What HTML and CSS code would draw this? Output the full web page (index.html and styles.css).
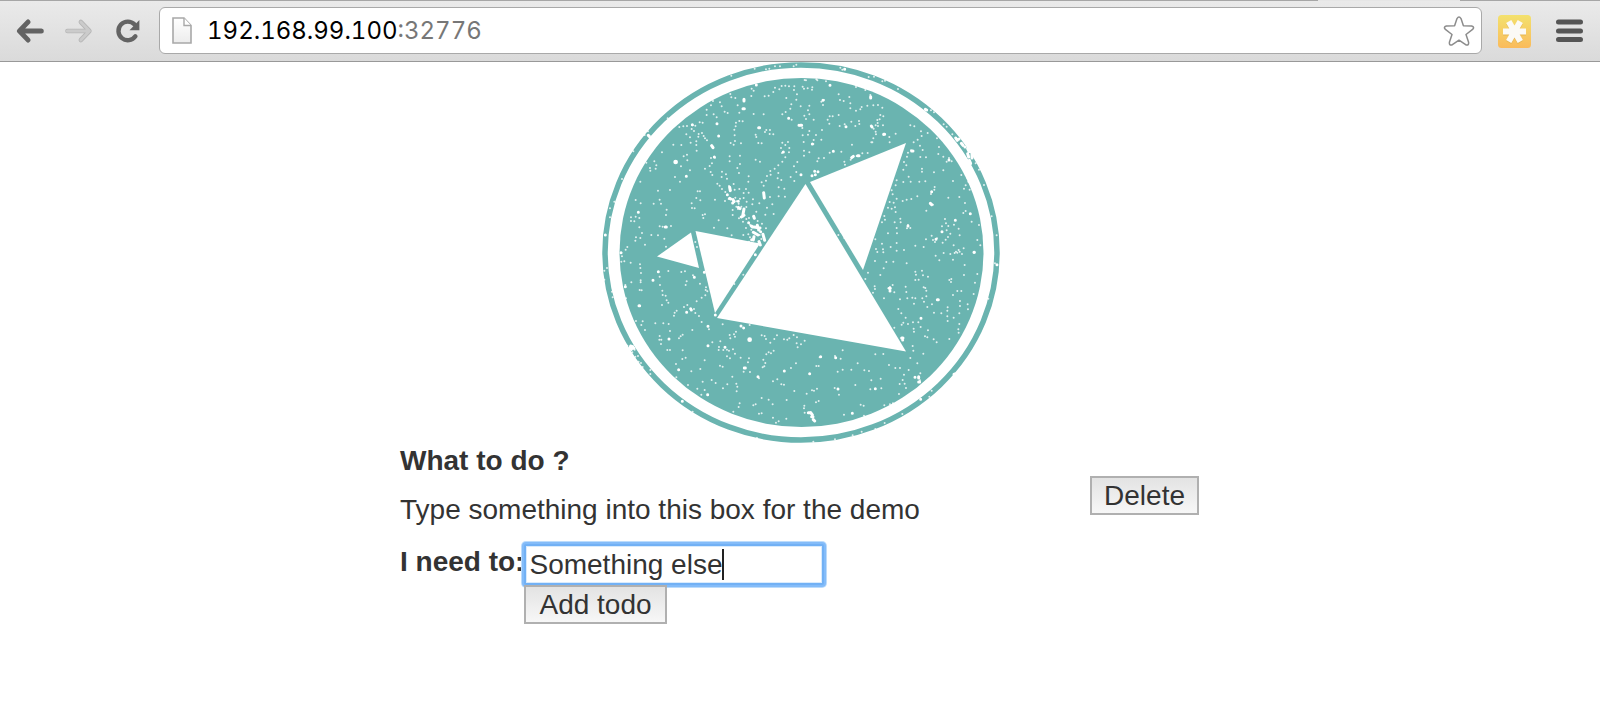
FILE: index.html
```html
<!DOCTYPE html>
<html lang="en">
<head>
<meta charset="utf-8">
<meta name="viewport" content="width=device-width, initial-scale=1">
<title>Todo</title>
<link rel="stylesheet" href="styles.css">
</head>
<body>
<header class="toolbar">
  <span class="tab-gap"></span>
  <nav class="nav">
    <button class="icon-btn" type="button" aria-label="Back">
      <svg width="28" height="26" viewBox="0 0 28 26"><path d="M26 13H4M12 4L3 13l9 9" fill="none" stroke="#636363" stroke-width="5" stroke-linecap="round" stroke-linejoin="round" transform="translate(.5 0) scale(.96 1)"/></svg>
    </button>
    <button class="icon-btn" type="button" aria-label="Forward">
      <svg width="28" height="26" viewBox="0 0 28 26"><path d="M3 13h22M17 4l9 9-9 9" fill="none" stroke="#b6b6b6" stroke-width="4.6" stroke-linecap="round" stroke-linejoin="round" transform="translate(-.5 0) scale(.96 1)"/><path d="M3 13h22M17 4l9 9-9 9" fill="none" stroke="#cbcbcb" stroke-width="3" stroke-linecap="round" stroke-linejoin="round" transform="translate(-.5 0) scale(.96 1)"/></svg>
    </button>
    <button class="icon-btn" type="button" aria-label="Reload">
      <svg width="28" height="26" viewBox="0 0 28 26"><path d="M20.6 6.6A9.3 9.3 0 1 0 21.4 18.2" fill="none" stroke="#636363" stroke-width="4.4" stroke-linecap="round"/><path d="M25.400 2v10.200H15.500z" fill="#636363"/></svg>
    </button>
  </nav>
  <div class="omnibox">
    <svg width="20" height="27" viewBox="0 0 20 27"><defs><linearGradient id="paper" x2="0" y2="1"><stop offset="0" stop-color="#fff"/><stop offset="1" stop-color="#ececec"/></linearGradient></defs><path d="M1 1h11l7 7.5V26H1z" fill="url(#paper)" stroke="#a8a8a8" stroke-width="1.6"/><path d="M12 1v7.5h7" fill="#fff" stroke="#a8a8a8" stroke-width="1.4"/></svg>
    <div class="url" role="textbox" aria-label="Address" tabindex="0">192.168.99.100<span class="port">:32776</span></div>
    <button class="star" type="button" aria-label="Bookmark this page">
      <svg width="32" height="32" viewBox="0 0 32 32"><path d="M14 3.6Q16 .4 18 3.6L20.4 10.7 28.7 11Q32 12 29.6 14.4L23 19.5 25.6 27.3Q26 30.6 23 29.9L16 25.2 9 29.9Q6 30.6 6.400 27.3L9 19.500 2.400 14.400Q0 12 3.300 11L11.600 10.700z" fill="#fff" stroke="#8c8c8c" stroke-width="1.5" stroke-linejoin="round"/></svg>
    </button>
  </div>
  <button class="icon-btn extension" type="button" aria-label="Extension">
    <svg width="33" height="33" viewBox="0 0 33 33"><defs><linearGradient id="gold" x2="0" y2="1"><stop offset="0" stop-color="#f3e16d"/><stop offset="1" stop-color="#fabb5c"/></linearGradient></defs><rect width="33" height="33" rx="3.500" fill="url(#gold)"/><g fill="none" stroke-width="6"><path d="M5 17.500h23M10.700 7.500l11.600 20M22.300 7.500l-11.600 20" stroke="#e4b654"/><path d="M5 16.500h23M10.700 6.500l11.600 20M22.300 6.500l-11.600 20" stroke="#fbfaf6"/></g></svg>
  </button>
  <button class="icon-btn menu" type="button" aria-label="Menu">
    <svg width="27" height="24" viewBox="0 0 27 24"><path d="M2.500 3h22M2.500 12h22M2.500 20.500h22" stroke="#555" stroke-width="5" stroke-linecap="round"/></svg>
  </button>
</header>
<main class="page">
  <svg class="logo" width="400" height="381" viewBox="600 62 400 381" role="img" aria-label="Fish logo">
    <ellipse cx="801" cy="252.500" rx="196" ry="187.600" fill="none" stroke="#6ab4b0" stroke-width="5.500"/>
    <ellipse cx="801.500" cy="252.500" rx="182" ry="174.500" fill="#6ab4b0"/>
    <g fill="#fff">
      <path d="M805.500 184L906 351.500 717 318z"/>
      <path d="M810 182l96-39-43 127z"/>
      <path d="M695.500 231L760 243.500 715 313z"/>
      <path d="M691 232.500L657 256.500 699 268z"/>
    </g>
    <g class="specks" transform="translate(590 55) scale(.3333)">
      <path d="M575 93h0M586 92h0M597 94h0M613 94h0M612 105h0M524 124h0M536 122h0M550 111h0M555 98h0M568 103h0M491 107h0M485 101h0M484 123h0M421 117h0M424 127h0M436 129h0M443 151h0M390 142h0M395 154h0M369 138h0M363 151h0M350 164h0M350 180h0M371 178h0M380 187h0M404 170h0M413 174h0M448 173h0M491 177h0M521 178h0M577 178h0M589 129h0M619 134h0M604 148h0M601 161h0M621 118h0M587 171h0M605 194h0M329 202h0M338 203h0M308 211h0M316 212h0M291 213h0M280 214h0M268 216h0M305 222h0M312 228h0M289 238h0M300 247h0M302 263h0M326 237h0M336 234h0M341 243h0M345 250h0M325 245h0M351 256h0M319 259h0M319 270h0M320 287h0M250 269h0M274 270h0M216 292h0M291 299h0M281 304h0M292 316h0M273 334h0M193 319h0M199 331h0M197 341h0M180 339h0M181 347h0M169 323h0M151 380h0M204 407h0M240 405h0M255 366h0M270 380h0M300 346h0M345 341h0M359 333h0M366 325h0M363 309h0M375 308h0M362 351h0M367 360h0M396 350h0M395 366h0M408 358h0M411 371h0M382 386h0M389 392h0M396 402h0M406 411h0M417 393h0M431 387h0M434 404h0M448 402h0M438 203h0M448 198h0M458 199h0M437 214h0M433 224h0M434 241h0M435 258h0M422 264h0M431 269h0M453 265h0M450 302h0M419 304h0M419 319h0M450 327h0M442 339h0M447 354h0M476 364h0M475 380h0M468 402h0M476 413h0M461 414h0M505 264h0M515 265h0M497 314h0M510 320h0M529 225h0M540 225h0M550 238h0M539 237h0M525 231h0M497 239h0M499 246h0M577 263h0M573 279h0M586 270h0M594 261h0M598 279h0M597 292h0M576 294h0M586 307h0M577 320h0M565 331h0M554 341h0M541 348h0M542 359h0M531 363h0M528 377h0M515 382h0M521 392h0M565 354h0M563 370h0M574 375h0M566 397h0M583 401h0M602 366h0M622 321h0M612 334h0M619 351h0M613 378h0M585 425h0M566 424h0M540 426h0M547 448h0M531 458h0M551 477h0M526 479h0M508 445h0M489 433h0M137 435h0M191 446h0M209 434h0M213 446h0M152 445h0M148 489h0M137 485h0M123 487h0M123 498h0M133 499h0M148 517h0M156 534h0M138 547h0M151 549h0M136 557h0M184 540h0M204 541h0M165 569h0M223 551h0M228 575h0M112 576h0M107 584h0M218 515h0M230 464h0M228 480h0M209 514h0M243 513h0M305 445h0M306 459h0M323 409h0M330 409h0M319 429h0M331 436h0M314 460h0M375 434h0M338 480h0M345 478h0M340 489h0M386 496h0M372 518h0M412 520h0M425 541h0M405 438h0M416 432h0M439 439h0M450 431h0M461 429h0M470 440h0M469 456h0M487 448h0M439 455h0M428 465h0M428 480h0M444 462h0M459 500h0M469 492h0M480 509h0M468 519h0M475 538h0M460 540h0M499 470h0M491 484h0M503 498h0M516 506h0M528 520h0M446 446h0M454 455h0M436 428h0M447 490h0M477 489h0M484 524h0M480 547h0M509 540h0M514 552h0M477 560h0"/>
      <path class="mid" d="M462 133v5M459 161h4M381 206h0M386 243h0M365 272l4 6M373 306h0M289 364h0M307 209h0M596 190h0M506 218h3M580 291h0M627 211h0M419 397l2 10M412 419h0M419 430l3 2M429 434l3 6M428 444h0M445 439h0M445 457l5 4M462 462l-4 22M454 486l8-5M521 413l2 16M476 503h0M484 513l4 3M491 484l2 6M492 516l18 3M502 511l4 14M490 532l14 8M492 545l-2 10M512 530h0M519 538l5 18M507 560l4 10M485 554h0M226 516h3M145 472h0M93 593h0M46 540h0M178 244l-3-3M499 90h0"/>
      <path class="big" d="M257 321h0"/>
      <path d="M73 440h0M96 372h0M130 289h0M164 240h0M174 229h0M233 190h0M424 62h0M494 41h0M528 43h0M538 41h0M555 34h0M570 34h0M611 34h0M619 29h0M60 460h0M60 487h0M321 576h0M316 561h0"/>
    </g>
    <g class="specks" transform="translate(800 55) scale(.3333)">
      <path d="M14 75h0M8 95h0M12 101h0M23 100h0M37 97h0M36 104h0M52 76h0M78 79h0M148 126h0M116 118h0M120 135h0M131 138h0M151 145h0M168 96h0M196 105h0M211 120h0M220 151h0M234 150h0M247 158h0M202 152h0M185 156h0M181 163h0M168 167h0M151 160h0M116 180h0M98 184h0M89 184h0M83 194h0M88 206h0M69 150h0M72 135h0M64 140h0M2 154h0M28 152h0M24 166h0M28 178h0M41 194h0M18 192h0M13 182h0M119 213h0M134 208h0M154 200h0M166 213h0M178 207h0M177 198h0M241 180h0M250 184h0M239 193h0M232 195h0M233 204h0M227 211h0M249 211h0M221 221h0M227 230h0M228 238h0M220 250h0M217 262h0M234 213h0M287 236h0M268 246h0M269 262h0M251 240h0M214 262h0M156 269h0M66 225h0M48 240h0M41 255h0M28 228h0M24 239h0M8 241h0M11 261h0M7 219h0M12 287h0M12 302h0M28 292h0M40 267h0M64 254h0M56 310h0M52 319h0M72 309h0M89 293h0M124 290h0M133 320h0M152 314h0M135 329h0M170 303h0M187 295h0M203 294h0M331 211h0M343 214h0M363 229h0M383 234h0M365 243h0M353 254h0M341 262h0M333 286h0M324 293h0M321 305h0M312 321h0M310 344h0M319 331h0M360 272h0M368 285h0M361 306h0M378 307h0M411 250h0M417 276h0M415 297h0M430 305h0M447 309h0M440 320h0M455 319h0M430 346h0M402 352h0M366 341h0M366 350h0M326 365h0M332 380h0M310 381h0M290 376h0M287 391h0M275 406h0M278 418h0M358 380h0M376 379h0M404 396h0M403 404h0M393 417h0M352 424h0M334 432h0M320 434h0M308 438h0M290 431h0M281 443h0M264 458h0M275 461h0M285 457h0M287 471h0M269 441h0M379 467h0M399 449h0M445 428h0M478 426h0M459 378h0M484 360h0M501 368h0M505 380h0M497 391h0M492 401h0M509 404h0M495 444h0M490 474h0M497 468h0M510 476h0M253 483h0M255 494h0M246 502h0M301 491h0M284 502h0M302 502h0M290 519h0M291 535h0M264 535h0M324 510h0M321 520h0M331 519h0M226 553h0M246 566h0M228 582h0M249 583h0M272 576h0M290 564h0M312 585h0M346 572h0M371 576h0M405 561h0M399 555h0M411 550h0M378 553h0M395 542h0M426 514h0M438 505h0M445 513h0M440 526h0M435 492h0M462 509h0M476 521h0M479 541h0M451 536h0M444 546h0M437 554h0M428 563h0M491 580h0M476 585h0M468 590h0M461 571h0M541 571h0M532 555h0M537 510h0M515 500h0M122 530h0M133 549h0M115 540h0"/>
      <path class="mid" d="M90 91h0M212 125v4M69 136h0M138 215h0M1 211h4M214 213l2 3M251 238h3M37 267h0M100 289h0M3 359h0M155 308l5-4M173 302h4M44 349h0M46 359h0M54 350h0M36 362h0M335 288h4M447 315h0M395 410h0M391 445l4 4M324 513h0M426 530h0M466 496h0M511 476h0M408 553h0M523 592h0M376 163l4 2M467 249l5 7M477 252h0M484 265l5 6M503 281l4 8M503 296l3 10M516 297v12M508 316l4 10M495 276h0M512 290h0M134 43h0"/>
      <path d="M18 76h0M49 73h0M121 38h0M127 44h0M206 66h0M222 65h0M247 79h0M255 77h0M294 102h0M393 166h0M402 172h0M431 208h0M440 215h0M457 238h0M527 325h0M537 344h0M552 390h0M575 484h0M590 541h0"/>
    </g>
    <g class="specks" transform="translate(590 250) scale(.3333)">
      <path d="M94 8h0M96 19h0M94 35h0M103 34h0M122 38h0M150 43h0M151 54h0M153 69h0M152 91h0M152 97h0M124 97h0M106 105h0M149 120h0M155 121h0M210 105h0M209 80h0M235 63h0M274 66h0M285 64h0M290 94h0M287 105h0M309 76h0M330 101h0M348 112h0M347 120h0M352 124h0M346 136h0M335 143h0M320 154h0M217 122h0M218 135h0M227 137h0M230 151h0M235 158h0M216 165h0M260 182h0M254 188h0M252 197h0M282 171h0M292 165h0M312 177h0M316 189h0M327 198h0M196 220h0M220 220h0M236 222h0M240 243h0M209 258h0M208 269h0M214 269h0M213 282h0M267 265h0M272 259h0M278 254h0M307 240h0M335 216h0M357 238h0M398 223h0M138 213h0M158 214h0M154 225h0M165 240h0M232 300h0M240 300h0M278 301h0M344 331h0M367 277h0M391 274h0M387 291h0M386 300h0M400 300h0M411 299h0M417 302h0M429 298h0M411 319h0M420 325h0M435 311h0M419 255h0M421 265h0M432 253h0M438 245h0M435 260h0M515 256h0M524 258h0M528 267h0M541 278h0M553 267h0M561 256h0M582 268h0M592 269h0M598 265h0M611 255h0M621 262h0M620 280h0M623 292h0M551 302h0M543 310h0M536 307h0M529 313h0M520 329h0M526 339h0M523 349h0M518 352h0M477 325h0M474 337h0M452 323h0M461 365h0M480 366h0M427 380h0M398 350h0M390 347h0M331 357h0M287 323h0M277 327h0M258 342h0M304 364h0M294 405h0M322 416h0M338 395h0M344 420h0M334 434h0M365 390h0M377 399h0M412 403h0M399 415h0M439 401h0M442 410h0M440 424h0M507 385h0M562 388h0M549 394h0M574 403h0M582 404h0M613 423h0M603 354h0M618 340h0M515 444h0M536 449h0M548 463h0M590 450h0M490 466h0M497 463h0M446 471h0M449 460h0M515 490h0M507 491h0M549 503h0M589 506h0M558 518h0M566 514h0M430 485h0"/>
      <path class="mid" d="M205 65h0M189 91h0M304 180h0M302 176h0M290 187h0M313 82h0M354 229h0M237 267h0M354 287h0M461 234h0M453 228h0M405 292h0M463 354h3M583 363h0M504 380h0M266 359h0M353 434h0M496 14h0M343 67h0M376 195h0M106 110h0M277 454h0M122 288l-3 8M128 290l-4 8M132 295h0M147 167h2"/>
      <path class="big" d="M479 269h0"/>
      <path d="M51 54h0M43 62h0M43 89h0M66 125h0M68 142h0M108 145h0M112 287h0M134 299h0M127 307h0M136 320h0M144 318h0M146 335h0M153 339h0M158 351h0M181 360h0M181 372h0M308 485h0M501 564h0M460 74h0M433 102h0M259 382h0M479 225h0"/>
    </g>
    <g class="specks" transform="translate(800 250) scale(.3333)">
      <path d="M225 33h0M232 6h0M250 7h0M290 2h0M259 36h0M280 35h0M251 55h0M241 75h0M204 68h0M320 40h0M346 65h0M348 74h0M366 62h0M369 76h0M384 80h0M356 89h0M346 90h0M407 17h0M418 31h0M431 9h0M459 29h0M451 12h0M464 9h0M472 8h0M486 12h0M479 5h0M494 45h0M492 75h0M532 72h0M525 98h0M448 90h0M454 87h0M453 96h0M317 110h0M319 126h0M322 145h0M300 148h0M337 143h0M346 145h0M342 161h0M367 145h0M372 155h0M371 112h0M376 114h0M379 122h0M379 139h0M396 163h0M382 171h0M402 188h0M424 190h0M443 172h0M442 182h0M442 199h0M443 213h0M461 203h0M478 190h0M480 168h0M480 153h0M459 135h0M472 123h0M484 123h0M503 163h0M504 178h0M521 132h0M478 222h0M475 238h0M476 248h0M448 267h0M410 277h0M401 268h0M384 241h0M375 259h0M382 262h0M362 231h0M355 217h0M341 236h0M342 245h0M339 217h0M324 222h0M310 218h0M305 224h0M317 203h0M304 190h0M295 177h0M252 145h0M224 109h0M225 117h0M219 128h0M270 111h0M278 105h0M265 115h0M283 127h0M283 233h0M338 288h0M340 302h0M370 311h0M331 324h0M352 340h0M326 360h0M312 374h0M300 354h0M286 354h0M267 345h0M250 312h0M226 313h0M173 340h0M193 361h0M207 363h0M154 359h0M128 359h0M113 365h0M128 301h0M105 318h0M122 326h0M59 322h0M49 348h0M56 348h0M14 272h0M3 283h0M42 422h0M36 421h0M51 416h0M20 431h0M48 457h0M56 453h0M13 467h0M12 475h0M114 416h0M117 434h0M104 414h0M166 405h0M211 418h0M214 391h0M242 386h0M244 415h0M297 432h0M299 402h0M308 390h0M314 401h0M318 414h0M361 370h0M360 391h0M182 464h0M191 467h0M132 494h0M14 488h0"/>
      <path class="mid" d="M522 7h0M363 205h0M268 115h3M270 123h0M305 264h4M308 270h0M62 320h0M107 323h0M29 371h0M226 416h0M356 380v4M345 382h0M356 396h3M25 488h5M32 488l5 7M35 500h4M40 509l4 4M157 490h0M114 417h0M591 44h0M462 373h0M362 448h0M412 149h3"/>
      <path d="M192 497h0M253 466h0M270 463h0M279 460h0M388 440h0M307 492h0M254 519h0M226 537h0M185 545h0M158 556h0M105 568h0M40 575h0M565 146h0M585 40h0M395 422h0M372 429h0M465 370h0M196 87h0"/>
    </g>
  </svg>
  <section class="todo">
    <div class="todo-text">
      <h1 class="title">What to do ?</h1>
      <p class="item">Type something into this box for the demo</p>
    </div>
    <button class="btn delete" type="button">Delete</button>
  </section>
  <form class="add">
    <label class="label" for="todo">I need to:</label>
    <div class="fields">
      <div class="field">
        <input class="input" id="todo" type="text" value="Something else">
        <span class="caret"></span>
      </div>
      <button class="btn submit" type="button">Add todo</button>
    </div>
  </form>
</main>
</body>
</html>
```
FILE: styles.css
```css
* {
  box-sizing: border-box;
}

body {
  margin: 0;
  background: #fff;
  color: #333;
  font: 28px/36px "Liberation Sans", Arial, sans-serif;
}

button {
  padding: 0;
  font: inherit;
  color: inherit;
}

svg {
  display: block;
}

/* Browser toolbar */
.toolbar {
  position: relative;
  display: flex;
  align-items: center;
  height: 62px;
  padding: 0 17px 0 16px;
  border-top: 1px solid #a6a6a6;
  border-bottom: 1px solid #999;
  background: linear-gradient(#eaeaea, #dadada);
}

.tab-gap {
  position: absolute;
  top: -1px;
  right: 140px;
  width: 142px;
  height: 1px;
  background: #e6e6e6;
}

.nav {
  display: flex;
  gap: 21px;
  margin-right: 17px;
}

.icon-btn,
.star {
  border: 0;
  background: none;
}

.omnibox {
  display: flex;
  flex: 1;
  align-items: center;
  height: 47px;
  margin-bottom: 2px;
  padding: 1px 6px 0 12px;
  border: 1px solid #a9a9a9;
  border-radius: 6px;
  background: #fff;
}

.url {
  flex: 1;
  margin-left: 15px;
  font: 24px/32px Inter, sans-serif;
  font-variant-numeric: tabular-nums;
  color: #000;
}

.port {
  color: #777;
}

.extension {
  margin-left: 16px;
}

.menu {
  margin-left: 25px;
}

/* Todo page */
.page {
  max-width: 800px;
  margin: 0 auto;
}

.logo {
  max-width: 100%;
  margin: 0 auto;
}

.specks path {
  fill: none;
  stroke: #fff;
  stroke-opacity: .8;
  stroke-width: 6;
  stroke-linecap: round;
  stroke-linejoin: round;
}

.specks .mid {
  stroke-opacity: 1;
  stroke-width: 9;
}

.specks .big {
  stroke-opacity: 1;
  stroke-width: 14;
}

.todo {
  display: flex;
  align-items: center;
  justify-content: space-between;
}

.title {
  margin: 0 0 13px;
  font-size: 28px;
}

.item {
  margin: 0;
}

.btn {
  height: 39px;
  padding: 0 12px;
  border: 2px solid #b0b0b0;
  background: linear-gradient(#e3e3e3, #f7f7f7);
  line-height: 32px;
}

.delete {
  margin: 20px 1px 0 0;
}

.submit {
  position: relative;
  padding: 0 13px;
}

.add {
  display: flex;
  align-items: flex-start;
  margin-top: 16px;
}

.label {
  font-weight: bold;
}

.fields {
  display: flex;
  flex-direction: column;
  align-items: flex-start;
}

.field {
  position: relative;
}

.input {
  display: block;
  width: 300px;
  height: 41px;
  padding: 0 3px;
  border: 2px solid #72b1f5;
  border-radius: 2px;
  outline: 0;
  background: #fff;
  box-shadow: 0 0 0 2px #84bcf9, 0 0 0 3px #bcdcfc, inset 0 0 0 1px #d9ebfd;
  color: #333;
  font: inherit;
}

.caret {
  position: absolute;
  top: 5px;
  left: 198px;
  width: 2px;
  height: 31px;
  background: #222;
}
```
